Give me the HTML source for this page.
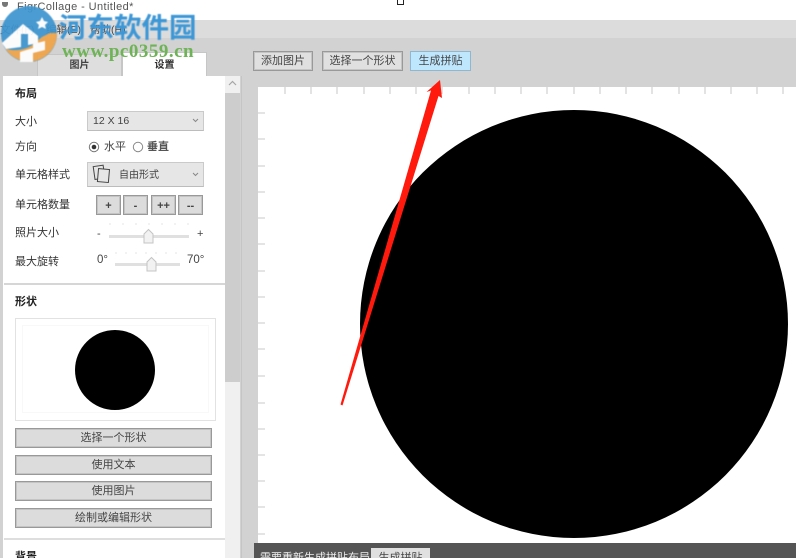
<!DOCTYPE html>
<html><head><meta charset="utf-8"><style>
html,body{margin:0;padding:0;background:#d2d2d2}
#p{position:relative;width:796px;height:558px;overflow:hidden;background:#d2d2d2;font-family:"Liberation Sans","Noto Sans CJK SC",sans-serif;font-size:11px;color:#333}
.a{position:absolute;white-space:nowrap}
.t{filter:blur(.35px)}
.btn{position:absolute;box-sizing:border-box;background:#dcdcdc;border:1px solid #999;box-shadow:inset 0 0 0 1px #c4c4c4;text-align:center;color:#444;font-size:11px;filter:blur(.3px)}
.lb{position:absolute;left:15px;font-size:11px;color:#333;white-space:nowrap;filter:blur(.3px)}
.h{position:absolute;left:15px;font-size:11px;font-weight:bold;color:#222;filter:blur(.3px)}
.combo{position:absolute;box-sizing:border-box;background:#e6e6e6;border:1px solid #cacaca;border-bottom-color:#bcbcbc}
</style></head><body><div id="p">
<div class="a" style="left:0;top:0;width:796px;height:20px;background:#fff"></div>
<div class="a" style="left:0;top:20px;width:796px;height:18px;background:#dcdcdc"></div>
<div class="a" style="left:397px;top:0;width:7px;height:5px;box-sizing:border-box;border:1px solid #222;border-top:0"></div>
<div class="a t" style="left:17px;top:1px;font-size:11px;color:#555;letter-spacing:.4px">FigrCollage - Untitled*</div>
<div class="a t" style="left:2px;top:2px;width:6px;height:5px;background:#777;border-radius:0 0 3px 3px"></div>
<div class="a t" style="left:0;top:22px;font-size:10.5px;color:#444">文件(F)</div>
<div class="a t" style="left:46px;top:22px;font-size:10.5px;color:#444">编辑(E)</div>
<div class="a t" style="left:90px;top:22px;font-size:10.5px;color:#444">帮助(H)</div>

<!-- tabs -->
<div class="a" style="left:37px;top:54px;width:85px;height:22px;box-sizing:border-box;background:#dedede;border:1px solid #c6c6c6;border-bottom:0"></div>
<div class="a" style="left:122px;top:52px;width:85px;height:25px;box-sizing:border-box;background:#fff;border:1px solid #c6c6c6;border-bottom:0"></div>
<div class="a t" style="left:37px;top:56px;width:85px;text-align:center;font-size:10px;font-weight:bold;color:#444">图片</div>
<div class="a t" style="left:122px;top:56px;width:85px;text-align:center;font-size:10px;font-weight:bold;color:#333">设置</div>

<!-- left panel -->
<div class="a" style="left:3px;top:76px;width:222px;height:482px;background:#fff"></div>
<div class="a" style="left:225px;top:76px;width:15px;height:482px;background:#f0f0f0"></div>
<div class="a" style="left:225px;top:93px;width:15px;height:289px;background:#cdcdcd"></div>
<svg class="a" style="left:228px;top:80px" width="9" height="7"><path d="M1 5 L4.5 1.5 L8 5" fill="none" stroke="#a6a6a6" stroke-width="1.2"/></svg>
<div class="a" style="left:241px;top:76px;width:1px;height:482px;background:#bcbcbc;opacity:.6"></div>

<div class="h" style="top:85px">布局</div>
<div class="lb" style="top:113px">大小</div>
<div class="combo" style="left:87px;top:111px;width:117px;height:20px"></div>
<div class="a t" style="left:93px;top:115px;font-size:10.5px;color:#444">12 X 16</div>
<svg class="a" style="left:192px;top:118px" width="7" height="5"><path d="M1 1 L3.5 3.5 L6 1" fill="none" stroke="#888"/></svg>
<div class="lb" style="top:138px">方向</div>
<svg class="a" style="left:87px;top:140px" width="60" height="14"><circle cx="7" cy="7" r="4.7" fill="#fff" stroke="#777"/><circle cx="7" cy="7" r="2.3" fill="#333"/><circle cx="51" cy="7" r="4.7" fill="#fff" stroke="#888"/></svg>
<div class="a t" style="left:104px;top:138px;font-size:11px;color:#444">水平</div>
<div class="a t" style="left:147px;top:138px;font-size:11px;font-weight:bold;color:#555">垂直</div>

<div class="lb" style="top:166px">单元格样式</div>
<div class="combo" style="left:87px;top:162px;width:117px;height:25px"></div>
<svg class="a" style="left:92px;top:164px" width="20" height="20" fill="#e6e6e6" stroke="#444" stroke-width="1"><rect x="2" y="2" width="10" height="13" transform="rotate(-8 6 8)"/><rect x="6" y="5" width="11" height="13" transform="rotate(5 11 11)"/></svg>
<div class="a t" style="left:119px;top:166px;font-size:10px;color:#444">自由形式</div>
<svg class="a" style="left:192px;top:172px" width="7" height="5"><path d="M1 1 L3.500 3.500 L6 1" fill="none" stroke="#888"/></svg>

<div class="lb" style="top:196px">单元格数量</div>
<div class="btn" style="left:96px;top:195px;width:25px;height:20px;font-weight:bold;line-height:20px">+</div>
<div class="btn" style="left:123px;top:195px;width:25px;height:20px;font-weight:bold;line-height:20px">-</div>
<div class="btn" style="left:151px;top:195px;width:25px;height:20px;font-weight:bold;line-height:20px">++</div>
<div class="btn" style="left:178px;top:195px;width:25px;height:20px;font-weight:bold;line-height:20px">--</div>

<div class="lb" style="top:224px">照片大小</div>
<div class="a t" style="left:97px;top:228px;font-size:11px;color:#444">-</div>
<div class="a t" style="left:197px;top:228px;font-size:11px;color:#444">+</div>
<div class="a" style="left:109px;top:235px;width:80px;height:3px;background:#e0e0e0"></div>
<svg class="a" style="left:143px;top:228px" width="11" height="16"><path d="M1 15V6L5.500 1.500L10 6V15Z" fill="#f2f2f2" stroke="#c4c4c4"/></svg>
<svg class="a" style="left:109px;top:223px" width="80" height="3"><path d="M1 0v2M14 0v2M27 0v2M40 0v2M53 0v2M66 0v2M79 0v2" stroke="#e4e4e4"/></svg>
<div class="lb" style="top:253px">最大旋转</div>
<div class="a t" style="left:97px;top:254px;font-size:11.500px;color:#444">0°</div>
<div class="a t" style="left:187px;top:254px;font-size:11.500px;color:#444">70°</div>
<div class="a" style="left:115px;top:263px;width:65px;height:3px;background:#e0e0e0"></div>
<svg class="a" style="left:146px;top:256px" width="11" height="16"><path d="M1 15V6L5.500 1.500L10 6V15Z" fill="#f2f2f2" stroke="#c4c4c4"/></svg>
<svg class="a" style="left:115px;top:252px" width="65" height="3"><path d="M1 0v2M11 0v2M21 0v2M31 0v2M41 0v2M51 0v2M61 0v2" stroke="#e4e4e4"/></svg>
<div class="a" style="left:4px;top:283px;width:221px;height:2px;background:#d6d6d6"></div>

<div class="h" style="top:293px">形状</div>
<div class="a" style="left:15px;top:318px;width:201px;height:103px;box-sizing:border-box;border:1.500px solid #e2e2e2;background:#fff"></div>
<div class="a" style="left:22px;top:325px;width:187px;height:88px;box-sizing:border-box;border:1px solid #f8f8f8"></div>
<div class="a" style="left:75px;top:329.500px;width:80px;height:80px;border-radius:50%;background:#000"></div>
<div class="btn" style="left:15px;top:428px;width:197px;height:20px;line-height:19px">选择一个形状</div>
<div class="btn" style="left:15px;top:455px;width:197px;height:20px;line-height:19px">使用文本</div>
<div class="btn" style="left:15px;top:481px;width:197px;height:20px;line-height:19px">使用图片</div>
<div class="btn" style="left:15px;top:508px;width:197px;height:20px;line-height:19px">绘制或编辑形状</div>
<div class="a" style="left:4px;top:538px;width:221px;height:2px;background:#dedede"></div>
<div class="h" style="top:548px">背景</div>

<!-- toolbar -->
<div class="btn" style="left:253px;top:51px;width:60px;height:20px;line-height:19px;background:#e0e0e0">添加图片</div>
<div class="btn" style="left:322px;top:51px;width:81px;height:20px;line-height:19px;background:#e0e0e0">选择一个形状</div>
<div class="btn" style="left:410px;top:51px;width:61px;height:20px;line-height:19px;background:#bee6fd;border-color:#8fb7d2;box-shadow:none">生成拼贴</div>

<!-- canvas -->
<div class="a" style="left:258px;top:87px;width:538px;height:456px;background:#fff"></div>
<svg class="a" style="left:258px;top:87px" width="538" height="456" stroke="#d4d4d4" stroke-width="1.300">
<path d="M27 0v7M53 0v7M79 0v7M106 0v7M132 0v7M158 0v7M184 0v7M211 0v7M237 0v7M263 0v7M289 0v7M316 0v7M342 0v7M368 0v7M394 0v7M421 0v7M447 0v7M473 0v7M499 0v7M525 0v7"/>
<path d="M0 26h7M0 52h7M0 79h7M0 105h7M0 131h7M0 157h7M0 184h7M0 210h7M0 236h7M0 262h7M0 289h7M0 316h7M0 342h7M0 368h7M0 394h7M0 420h7M0 447h7"/>
</svg>
<div class="a" style="left:360px;top:110px;width:428px;height:428px;border-radius:50%;background:#000"></div>
<div class="a" style="left:254px;top:543px;width:542px;height:15px;background:#555"></div>
<div class="a t" style="left:260px;top:549px;font-size:11px;color:#eee">需要重新生成拼贴布局</div>
<div class="a" style="left:371px;top:548px;width:59px;height:12px;background:#e0e0e0"></div>
<div class="a t" style="left:371px;top:549px;width:59px;text-align:center;font-size:11px;color:#444">生成拼贴</div>

<!-- arrow -->
<svg class="a" style="left:0;top:0" width="796" height="558"><polygon points="440,80 426.500,92 431,90.500 340.500,404.500 342.500,405.500 438.500,96 442,98" fill="#ff1a0d"/></svg>

<!-- watermark -->
<svg class="a" style="left:0;top:0;filter:blur(.4px);opacity:.93" width="62" height="66">
<circle cx="29" cy="34" r="28" fill="#3d95d0"/>
<path d="M5 48 C12 52 24 50 31 46 L42 37 L50 33 L57 33 A28 28 0 0 1 5 48Z" fill="#f0a348"/>
<path d="M2 43 L23 24 L38 36 L38 43 L28 45 L28 34 L21 34 L21 47 L6 49Z" fill="#fff"/>
<path d="M42 17 L44 21 L48 22 L45 25 L46 29 L42 27 L38 29 L39 25 L36 22 L40 21Z" fill="#fff"/>
<path d="M20 52 L33 48 L33 44 L45 41 L45 50 L33 53 L33 62 L20 62Z" fill="#fff"/>
</svg>
<div class="a" style="left:59px;top:9px;font-size:27.500px;line-height:32px;font-weight:bold;color:#3d97d6;letter-spacing:0;font-family:'Noto Sans CJK SC','WenQuanYi Zen Hei',sans-serif;filter:blur(.4px)">河东软件园</div>
<div class="a" style="left:62px;top:42px;font-size:19px;line-height:20px;font-weight:bold;color:#6eb356;font-family:'Liberation Serif',serif;letter-spacing:.5px;filter:blur(.3px)">www.pc0359.cn</div>
</div></body></html>
